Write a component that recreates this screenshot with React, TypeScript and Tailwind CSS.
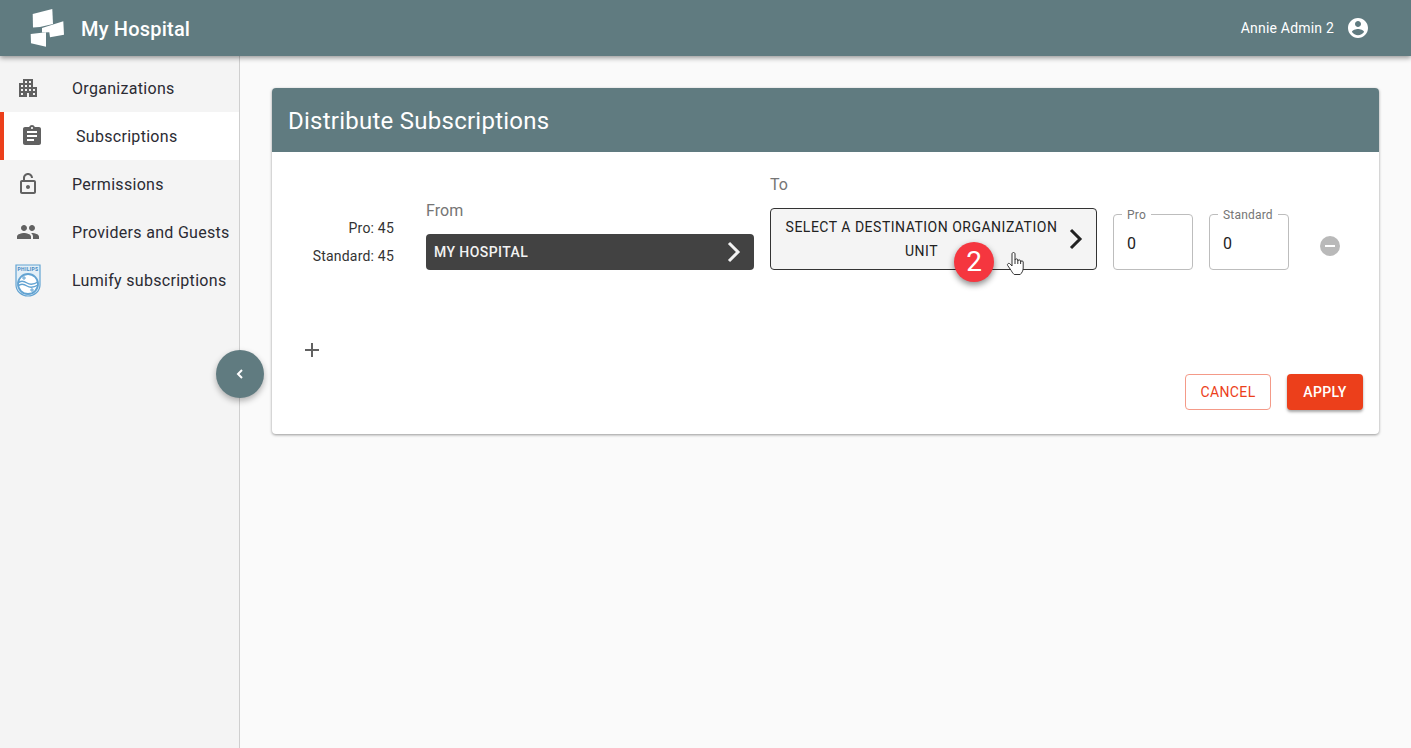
import React from "react";

const IconPath = ({ d, className }: { d: string; className?: string }) => (
    <svg viewBox="0 0 24 24" fill="currentColor" className={className}>
        <path d={d} fillRule="evenodd" />
    </svg>
);

const apartment =
    "M17 11V3H7v4H3v14h8v-4h2v4h8V11h-4zM7 19H5v-2h2v2zm0-4H5v-2h2v2zm0-4H5V9h2v2zm4 4H9v-2h2v2zm0-4H9V9h2v2zm0-4H9V5h2v2zm4 8h-2v-2h2v2zm0-4h-2V9h2v2zm0-4h-2V5h2v2zm4 12h-2v-2h2v2zm0-4h-2v-2h2v2z";
const assignment =
    "M19 3h-4.18C14.4 1.84 13.3 1 12 1c-1.3 0-2.4.84-2.82 2H5c-1.1 0-2 .9-2 2v14c0 1.1.9 2 2 2h14c1.1 0 2-.9 2-2V5c0-1.1-.9-2-2-2zm-7 0c.55 0 1 .45 1 1s-.45 1-1 1-1-.45-1-1 .45-1 1-1zm2 14H7v-2h7v2zm3-4H7v-2h10v2zm0-4H7V7h10v2z";
const lockOpen =
    "M7 8V6c0-2.76 2.24-5 5-5s5 2.24 5 5h-2c0-1.66-1.34-3-3-3S9 4.34 9 6v2h9c1.1 0 2 .9 2 2v10c0 1.1-.9 2-2 2H6c-1.1 0-2-.9-2-2V10c0-1.1.9-2 2-2h1zm11 12V10H6v10h12zM12 17c1.1 0 2-.9 2-2s-.9-2-2-2-2 .9-2 2 .9 2 2 2z";
const people =
    "M16 11c1.66 0 2.99-1.34 2.99-3S17.66 5 16 5c-1.66 0-3 1.34-3 3s1.34 3 3 3zm-8 0c1.66 0 2.99-1.34 2.99-3S9.66 5 8 5C6.34 5 5 6.34 5 8s1.34 3 3 3zm0 2c-2.33 0-7 1.17-7 3.5V19h14v-2.5c0-2.33-4.67-3.5-7-3.5zm8 0c-.29 0-.62.02-.97.05 1.16.84 1.97 1.97 1.97 3.45V19h6v-2.5c0-2.33-4.67-3.5-7-3.5z";
const accountCircle =
    "M12 2C6.48 2 2 6.48 2 12s4.48 10 10 10 10-4.48 10-10S17.52 2 12 2zm0 3c1.66 0 3 1.34 3 3s-1.34 3-3 3-3-1.34-3-3 1.34-3 3-3zm0 14.2c-2.5 0-4.71-1.28-6-3.22.03-1.99 4-3.08 6-3.08 1.99 0 5.97 1.09 6 3.08-1.29 1.94-3.5 3.22-6 3.22z";

const Logo = () => (
    <svg viewBox="29 8 36 40" className="w-9 h-10" fill="white">
        <path d="M32.7 14 L52.300 9 L53 24 L40 27 L33 27.500 Z" />
        <path d="M42 28 L63.300 21.300 L64 34.700 L50 37.300 L49.300 32.300 L42 32.500 Z" />
        <path d="M30.700 34 L46 32.300 L46 46.700 L31 43.300 Z" />
    </svg>
);

const PhilipsShield = () => (
    <svg viewBox="0 0 26 33" className="w-[26px] h-[33px]">
        <path d="M1 1h24v20c0 6-5.500 11-12 11S1 27 1 21z" fill="#e3eff7" stroke="#62a3d2" strokeWidth="1.200" />
        <text x="13" y="7" textAnchor="middle" fontSize="5" fontWeight="700" fill="#3f86bf">PHILIPS</text>
        <circle cx="13" cy="20" r="10" fill="white" stroke="#62a3d2" strokeWidth="1.800" />
        <path d="M3 19c3-3 6-2 9 0s6 2 11-1M3 22c3-3 6-2 9 0s6 2 11-1" fill="none" stroke="#62a3d2" strokeWidth="1.400" />
        <path d="M9 12v4M7 14h4M17 24v4M15 26h4" stroke="#62a3d2" strokeWidth="1" />
    </svg>
);

const Chevron = ({ className }: { className?: string }) => (
    <svg viewBox="0 0 16 24" fill="none" stroke="currentColor" strokeWidth="3" className={className}>
        <path d="M3 3l9 9-9 9" />
    </svg>
);

const navItems = [
    { label: "Organizations", icon: <IconPath d={apartment} className="w-6 h-6" /> },
    { label: "Subscriptions", icon: <IconPath d={assignment} className="w-6 h-6" />, active: true },
    { label: "Permissions", icon: <IconPath d={lockOpen} className="w-6 h-6" /> },
    { label: "Providers and Guests", icon: <IconPath d={people} className="w-6 h-6" /> },
    { label: "Lumify subscriptions", icon: <PhilipsShield /> },
];

const QuantityField = ({ label }: { label: string }) => (
    <div className="relative w-20 h-14 rounded border border-[#bdbdbd] pl-[13px] pt-[19px] text-base leading-5 text-[#222]">
        <span className="absolute -top-[7px] left-[8px] bg-white px-[5px] text-xs leading-[14px] tracking-[0.2px] text-[#757575]">
            {label}
        </span>
        0
    </div>
);

const App: React.FC = () => {
    return (
        <div className="h-screen overflow-hidden flex flex-col bg-[#fafafa] font-['Roboto',sans-serif]">
            <header className="relative z-20 h-14 shrink-0 flex items-center bg-[#607b80] pl-[29px] pr-[41px] text-white shadow-[0_2px_5px_rgba(0,0,0,0.4)]">
                <Logo />
                <span className="ml-4 pt-[2px] text-xl font-medium tracking-[0.2px]">My Hospital</span>
                <span className="ml-auto text-sm tracking-[0.2px]">Annie Admin 2</span>
                <IconPath d={accountCircle} className="ml-[12px] w-6 h-6" />
            </header>

            <div className="flex flex-1 min-h-0">
                <aside className="relative w-60 shrink-0 bg-[#f4f4f4] border-r border-[#cfcfcf] pt-2">
                    {navItems.map((item) => (
                        <div
                            key={item.label}
                            className={`h-12 flex items-center text-base tracking-[0.3px] text-[#2b2b33] ${
                                item.active ? "bg-white border-l-4 border-[#ec3f1b]" : ""
                            }`}
                        >
                            <span className="w-14 flex justify-center text-[#616161]">{item.icon}</span>
                            <span className="ml-4 pt-[2px] whitespace-nowrap">{item.label}</span>
                        </div>
                    ))}
                    <button className="absolute left-[216px] top-[294px] w-12 h-12 rounded-full bg-[#607b80] flex items-center justify-center text-white shadow-[0_3px_6px_rgba(0,0,0,0.3)]">
                        <svg viewBox="0 0 12 12" fill="none" stroke="currentColor" strokeWidth="2" className="w-3 h-3">
                            <path d="M8 2L4 6l4 4" />
                        </svg>
                    </button>
                </aside>

                <main className="flex-1 pl-8 pr-8 pt-8">
                    <section className="w-[1107px] rounded bg-white shadow-[0_1px_3px_rgba(0,0,0,0.4)]">
                        <div className="h-16 flex items-center rounded-t bg-[#607b80] px-4 pt-[2px] text-2xl tracking-[0.25px] text-white">
                            Distribute Subscriptions
                        </div>
                        <div className="px-4 pt-[22px] pb-6">
                            <div className="flex items-end">
                                <div className="w-[106px] text-right text-sm leading-7 tracking-[0.2px] text-[#333]">
                                    <div>Pro: 45</div>
                                    <div>Standard: 45</div>
                                </div>
                                <div className="ml-8 w-[328px]">
                                    <div className="h-5 mb-[14px] text-base leading-[22px] tracking-[0.1px] text-[#757575]">From</div>
                                    <div className="h-9 rounded flex items-center justify-between bg-[#424242] pl-2 pr-3 text-sm font-medium tracking-[0.42px] text-[#f2f2f2]">
                                        MY HOSPITAL
                                        <Chevron className="w-4 h-6" />
                                    </div>
                                </div>
                                <div className="ml-4 w-[327px]">
                                    <div className="h-5 mb-[14px] text-base leading-[22px] text-[#757575]">To</div>
                                    <div className="relative h-[62px] rounded border border-[#333] bg-[#f4f4f4] flex items-center pr-3">
                                        <div className="flex-1 pl-3 pr-2 text-center text-sm leading-6 tracking-[0.5px] text-[#222]">
                                            SELECT A DESTINATION ORGANIZATION UNIT
                                        </div>
                                        <Chevron className="w-4 h-6 text-[#222] shrink-0" />
                                        <div className="absolute left-[183px] top-[33px] w-10 h-10 rounded-full bg-[#f5363f] flex items-center justify-center text-[28px] text-white shadow-[0_3px_6px_rgba(0,0,0,0.45)]">
                                            2
                                        </div>
                                        <svg viewBox="1006 250 22 28" className="absolute left-[235px] top-[41px] w-[22px] h-7" fill="white" stroke="#333" strokeWidth="1">
                                            <path d="M1012 266V254c0-2 3-2 3 0V260c0-1.500 2.800-1.500 2.800 0v1c0-1.500 2.800-1.500 2.800 0v1c0-1.500 2.600-1.500 2.600 0v6c0 3-1.500 5-3 6.500h-6c-1-1-2-2-3-4l-3.500-5c-1-1.500 1-3 2.500-1.500z" />
                                            <path d="M1015 260v4M1017.800 261v3M1020.600 262v2" fill="none" />
                                        </svg>
                                    </div>
                                </div>
                                <div className="ml-4">
                                    <QuantityField label="Pro" />
                                </div>
                                <div className="ml-4">
                                    <QuantityField label="Standard" />
                                </div>
                                <div className="ml-[31px] mb-[14px] w-5 h-5 rounded-full bg-[#b9b9b9] flex items-center justify-center">
                                    <span className="w-[10px] h-[2px] bg-white" />
                                </div>
                            </div>

                            <svg viewBox="0 0 24 24" className="mt-[68px] ml-3 w-6 h-6 text-[#616161]" fill="currentColor">
                                <path d="M19 13h-6v6h-2v-6H5v-2h6V5h2v6h6v2z" />
                            </svg>

                            <div className="mt-3 flex justify-end gap-4">
                                <button className="h-9 w-[86px] rounded border border-[#f49a88] text-sm tracking-[0.4px] text-[#ec3f1b]">
                                    CANCEL
                                </button>
                                <button className="h-9 w-[76px] rounded bg-[#ec3f1b] text-sm font-medium tracking-[0.4px] text-white shadow-[0_2px_3px_rgba(0,0,0,0.35)]">
                                    APPLY
                                </button>
                            </div>
                        </div>
                    </section>
                </main>
            </div>
        </div>
    );
};

export default App;
